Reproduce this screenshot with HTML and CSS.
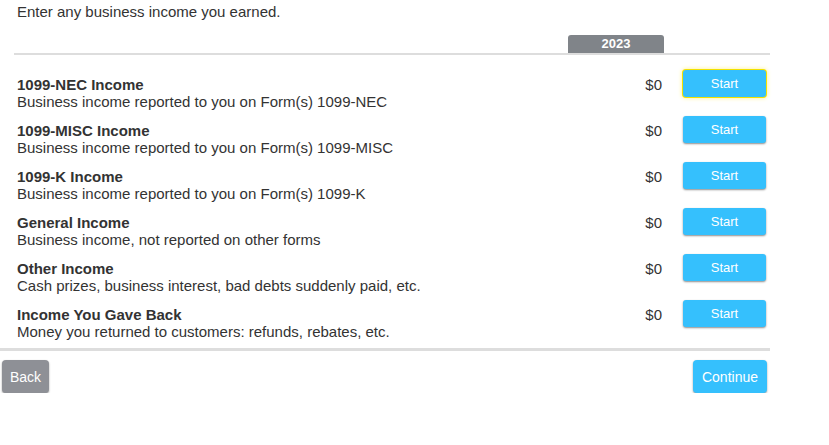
FILE: index.html
```html
<!DOCTYPE html>
<html>
<head>
    <meta http-equiv="Content-Type" content="text/html; charset=UTF-8">
    <title>Business Income</title>
    <link rel="stylesheet" href="styles.css">
</head>
<body>
<div class="page">
    <p class="intro">Enter any business income you earned.</p>

    <div class="yearbar">
        <span class="year">2023</span>
    </div>

    <div class="rows">
        <div class="row">
            <div class="label"><b>1099-NEC Income</b><span>Business income reported to you on Form(s) 1099-NEC</span></div>
            <div class="amt">$0</div>
            <button class="start focus">Start</button>
        </div>
        <div class="row">
            <div class="label"><b>1099-MISC Income</b><span>Business income reported to you on Form(s) 1099-MISC</span></div>
            <div class="amt">$0</div>
            <button class="start">Start</button>
        </div>
        <div class="row">
            <div class="label"><b>1099-K Income</b><span>Business income reported to you on Form(s) 1099-K</span></div>
            <div class="amt">$0</div>
            <button class="start">Start</button>
        </div>
        <div class="row">
            <div class="label"><b>General Income</b><span>Business income, not reported on other forms</span></div>
            <div class="amt">$0</div>
            <button class="start">Start</button>
        </div>
        <div class="row">
            <div class="label"><b>Other Income</b><span>Cash prizes, business interest, bad debts suddenly paid, etc.</span></div>
            <div class="amt">$0</div>
            <button class="start">Start</button>
        </div>
        <div class="row">
            <div class="label"><b>Income You Gave Back</b><span>Money you returned to customers: refunds, rebates, etc.</span></div>
            <div class="amt">$0</div>
            <button class="start">Start</button>
        </div>
    </div>

    <div class="nav">
        <button class="back">Back</button>
        <button class="next">Continue</button>
    </div>
</div>
</body>
</html>
```

FILE: styles.css
```css
body {
  margin: 0;
  background: #ffffff;
  font-family: "Liberation Sans", Arial, sans-serif;
  color: #333333;
  font-size: 15px;
}

.page {
  width: 770px;
}

.intro {
  margin: 0;
  padding: 3px 0 0 17px;
  line-height: 17px;
}

.yearbar {
  margin: 15px 0 0 14px;
  border-bottom: 2px solid #dddddd;
  height: 18px;
  display: flex;
  padding-left: 554px;
}

.year {
  width: 96px;
  height: 18px;
  background: #808489;
  color: #ffffff;
  font-weight: bold;
  font-size: 13px;
  line-height: 18px;
  text-align: center;
  border-radius: 3px 3px 0 0;
}

.rows {
  padding: 7px 0 0 14px;
  height: 286px;
  border-bottom: 3px solid #dddddd;
}

.row {
  display: grid;
  grid-template-columns: 1fr 96px 83px;
  column-gap: 19px;
  height: 46px;
  padding-right: 4px;
}

.label {
  padding: 14px 0 0 3px;
  line-height: 17px;
}

.label b, .label span {
  display: block;
}

.amt {
  text-align: right;
  padding: 14px 2px 0 0;
  line-height: 17px;
}

.start {
  margin-top: 8px;
  height: 27px;
  border: none;
  border-radius: 3px;
  background: #35c0fd;
  color: #ffffff;
  font-family: "Liberation Sans", Arial, sans-serif;
  font-size: 13px;
  box-shadow: 0 1px 2px rgba(0, 0, 0, 0.45);
}

.start.focus {
  box-shadow: 0 0 0 1px #f2e200, 0 0 4px 1px #fff08a;
}

.nav {
  display: flex;
  justify-content: space-between;
  padding: 9px 3px 0 2px;
}

.nav button {
  height: 33px;
  border: none;
  border-radius: 4px;
  color: #ffffff;
  font-family: "Liberation Sans", Arial, sans-serif;
  font-size: 14px;
  padding: 0;
  box-shadow: 0 1px 2px rgba(0, 0, 0, 0.4);
}

.back {
  width: 47px;
  background: #8e9096;
}

.next {
  width: 74px;
  background: #35c0fd;
}
```
